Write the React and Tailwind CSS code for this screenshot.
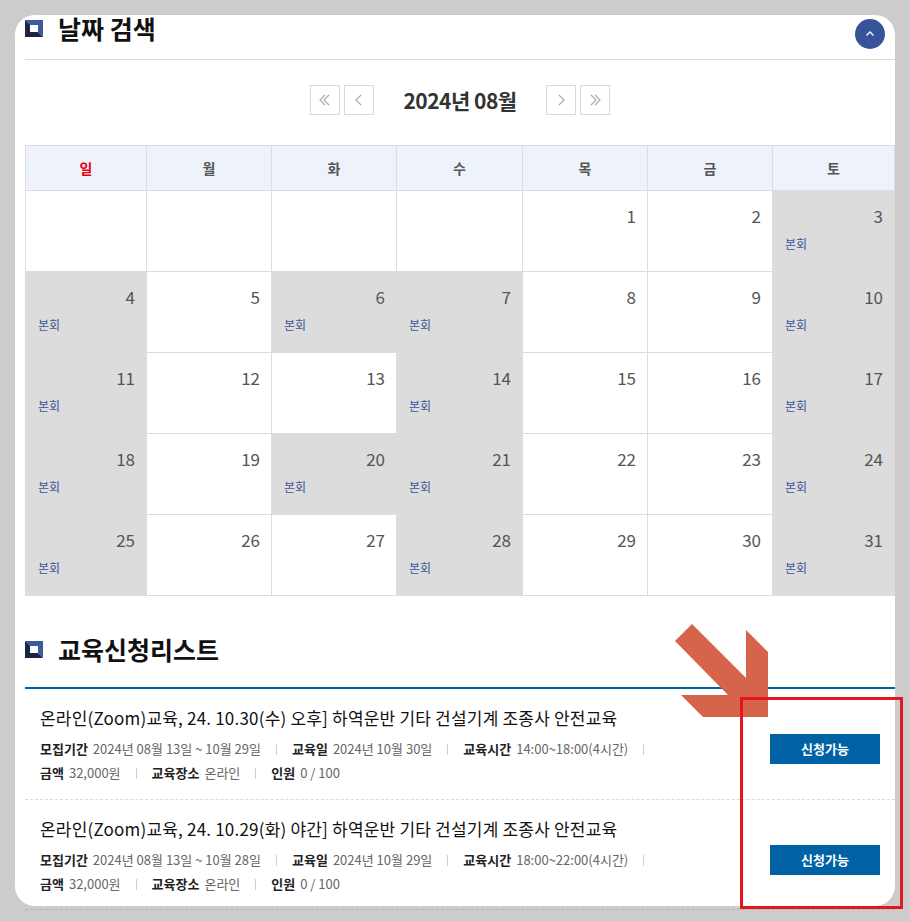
import React from "react";

const F = "font-['Noto_Sans_CJK_KR','Noto_Sans',sans-serif]";

function SqIcon() {
  return (
    <svg width="18" height="17" viewBox="0 0 18 17" className="shrink-0">
      <polygon points="0,0 18,0 18,17" fill="#3c5a9c" />
      <polygon points="0,0 0,17 18,17" fill="#1b2447" />
      <rect x="5" y="5" width="8" height="7" fill="#fff" />
    </svg>
  );
}

function NavBtn({ dir, dbl }) {
  return (
    <div className="w-[30px] h-[30px] border border-[#d9d9d9] flex items-center justify-center bg-white">
      <svg width="20" height="20" viewBox="0 0 20 20" fill="none" stroke="#aaa" strokeWidth="1.1">
        {dbl ? (
          <>
            <polyline points={dir === "l" ? "10,5 5,10 10,15" : "6,5 11,10 6,15"} />
            <polyline points={dir === "l" ? "14,5 9,10 14,15" : "10,5 15,10 10,15"} />
          </>
        ) : (
          <polyline points={dir === "l" ? "12,5 7,10 12,15" : "8,5 13,10 8,15"} />
        )}
      </svg>
    </div>
  );
}

const weeks = [
  [null, null, null, null, 1, 2, 3],
  [4, 5, 6, 7, 8, 9, 10],
  [11, 12, 13, 14, 15, 16, 17],
  [18, 19, 20, 21, 22, 23, 24],
  [25, 26, 27, 28, 29, 30, 31],
];
const gray = new Set([3, 4, 6, 7, 10, 11, 14, 17, 18, 20, 21, 24, 25, 28, 31]);
const days = ["일", "월", "화", "수", "목", "금", "토"];

function Sep() {
  return <span className="inline-block w-px h-[11px] bg-[#cfcfcf] mx-[15px]" />;
}

function Meta({ label, value, sep = true }) {
  return (
    <>
      <span className="font-bold text-[#222]">{label}</span>
      <span className="ml-[5px] text-[#666]">{value}</span>
      {sep && <Sep />}
    </>
  );
}

function Item({ title, period, day, time, last }) {
  return (
    <div className={`flex pl-[15px] pr-[15px] pt-[16px] pb-[14px] ${last ? "" : "border-b border-dashed border-[#dcdcdc]"}`}>
      <div className="flex-1">
        <div className="text-[17px] leading-[26px] text-[#111] tracking-[0.2px]">{title}</div>
        <div className="mt-[6px] text-[13px] leading-[24px] flex items-center whitespace-nowrap">
          <Meta label="모집기간" value={period} />
          <Meta label="교육일" value={day} />
          <Meta label="교육시간" value={time} />
        </div>
        <div className="text-[13px] leading-[24px] flex items-center whitespace-nowrap">
          <Meta label="금액" value="32,000원" />
          <Meta label="교육장소" value="온라인" />
          <Meta label="인원" value="0 / 100" sep={false} />
        </div>
      </div>
      <div className="mt-[29px] w-[110px] h-[30px] bg-[#0062a5] text-white text-[13px] font-bold flex items-center justify-center shrink-0">
        신청가능
      </div>
    </div>
  );
}

export default function App() {
  return (
    <div className={`relative w-[910px] h-[921px] bg-[#cccccc] pt-[15px] pl-[15px] overflow-hidden ${F}`}>
      <div className="w-[880px] h-[891px] bg-white rounded-[20px] overflow-hidden pl-[10px]">
        {/* header */}
        <div className="h-[45px] border-b border-[#dddddd] flex items-start justify-between">
          <div className="flex items-start">
            <div className="mt-[5px]"><SqIcon /></div>
            <div className="ml-[15px] text-[25px] leading-[26px] font-bold text-[#111]">날짜 검색</div>
          </div>
          <div className="mt-[4px] mr-[10px] w-[30px] h-[30px] rounded-full bg-[#37539a] flex items-center justify-center">
            <svg width="12" height="12" viewBox="0 0 12 12" fill="none" stroke="#fff" strokeWidth="1.3">
              <polyline points="2.5,7.5 6,4 9.5,7.5" />
            </svg>
          </div>
        </div>
        {/* month nav */}
        <div className="mt-[25px] flex items-center justify-center">
          <div className="flex gap-[4px]">
            <NavBtn dir="l" dbl />
            <NavBtn dir="l" />
          </div>
          <div className="mx-[29px] text-[21px] font-bold text-[#333] leading-[30px] tracking-[-0.5px]">2024년 08월</div>
          <div className="flex gap-[4px]">
            <NavBtn dir="r" />
            <NavBtn dir="r" dbl />
          </div>
        </div>
        {/* calendar */}
        <div className="mt-[30px] w-[870px] border-l border-t border-[#dddddd] grid grid-cols-[121px_125px_125px_126px_125px_125px_122px]">
          {days.map((d, i) => (
            <div
              key={d}
              className={`h-[45px] border-r border-b border-[#dddddd] bg-[#eef2fa] flex items-center justify-center text-[14px] font-bold ${i === 0 ? "text-[#e60012]" : "text-[#555]"}`}
            >
              {d}
            </div>
          ))}
          {weeks.flat().map((n, i) => (
            <div
              key={i}
              className={`h-[81px] border-r border-b border-[#dddddd] pt-[13px] pl-[12px] pr-[11px] ${n && gray.has(n) ? "bg-[#dcdcdc]" : "bg-white"}`}
            >
              {n && <div className="text-right text-[17px] leading-[24px] text-[#555]">{n}</div>}
              {n && gray.has(n) && <div className="mt-[7px] text-[12px] leading-[18px] text-[#3b5598]">본회</div>}
            </div>
          ))}
        </div>
        {/* list title */}
        <div className="mt-[33px] flex items-center h-[40px]">
          <SqIcon />
          <div className="ml-[15px] text-[25px] leading-[36px] font-bold text-[#111]">교육신청리스트</div>
        </div>
        <div className="mt-[18px] h-[2px] bg-[#0062a8]" />
        <Item
          title="온라인(Zoom)교육, 24. 10.30(수) 오후] 하역운반 기타 건설기계 조종사 안전교육"
          period="2024년 08월 13일 ~ 10월 29일"
          day="2024년 10월 30일"
          time="14:00~18:00(4시간)"
        />
        <Item
          title="온라인(Zoom)교육, 24. 10.29(화) 야간] 하역운반 기타 건설기계 조종사 안전교육"
          period="2024년 08월 13일 ~ 10월 28일"
          day="2024년 10월 29일"
          time="18:00~22:00(4시간)"
          last
        />
      </div>
      <div className="ml-[10px] mt-[3px] w-[870px] border-t border-dashed border-[#b5b5b5]" />

      {/* annotation arrow */}
      <svg className="absolute left-0 top-0 pointer-events-none" width="910" height="921">
        <polygon
          points="692,624 746,678 746,630 768,652 768,717 703,717 681,695 728,695 675,641"
          fill="#d6644a"
        />
      </svg>
      <div className="absolute left-[740px] top-[697px] w-[163px] h-[212px] border-[3px] border-[#e3151d]" />
    </div>
  );
}
